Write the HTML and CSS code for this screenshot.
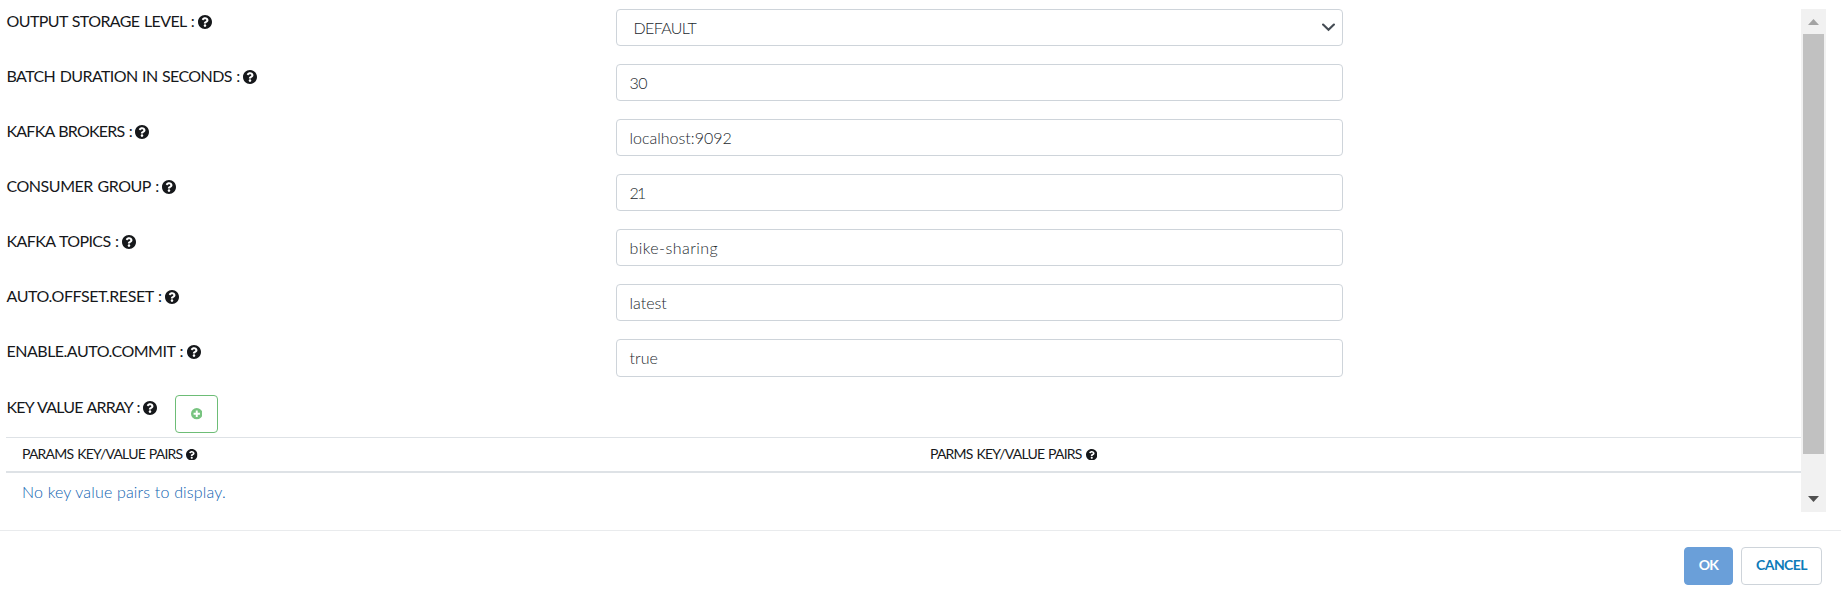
FILE: index.html
```
<!DOCTYPE html>
<html lang="en">
<head>
<meta charset="utf-8">
<title>Kafka settings</title>
<link rel="stylesheet" href="styles.css">
</head>
<body>
<svg class="defs" width="0" height="0" aria-hidden="true">
  <symbol id="help" viewBox="8 8 496 496"><path fill="currentColor" d="M504 256c0 137-111 248-248 248S8 393 8 256 119 8 256 8s248 111 248 248zM262.700 90c-54.500 0-89.300 23-116.500 63.800-3.500 5.300-2.400 12.400 2.700 16.300l34.700 26.300c5.200 3.900 12.600 3 16.700-2.100 17.900-22.700 30.100-35.800 57.300-35.800 20.400 0 45.700 13.100 45.700 33 0 15-12.400 22.700-32.500 34C247.100 238.500 216 254.900 216 296v4c0 6.600 5.400 12 12 12h56c6.600 0 12-5.400 12-12v-1.300c0-28.500 83.200-29.600 83.200-106.700 0-58-60.200-102-116.500-102zM256 338c-25.400 0-46 20.600-46 46s20.600 46 46 46 46-20.600 46-46-20.600-46-46-46z"/></symbol>
  <symbol id="plus" viewBox="0 0 12 12"><path fill="currentColor" fill-rule="evenodd" d="M6 0a6 6 0 1 1 0 12A6 6 0 0 1 6 0zM5 2.700V5H2.700v2H5v2.300h2V7h2.300V5H7V2.700z"/></symbol>
</svg>
<main class="scroller">
  <div class="content">
    <div class="row"><label class="label"><span class="l1">OUTPUT STORAGE LEVEL :</span><svg class="help"><use href="#help"/></svg></label><div class="field select"><span class="v1">DEFAULT</span><svg class="chevron" viewBox="0 0 12 8"><path d="M1 1.300 6 6l5-4.700" fill="none" stroke="#454c54" stroke-width="2" stroke-linecap="round"/></svg></div></div>
    <div class="row"><label class="label"><span class="l2">BATCH DURATION IN SECONDS :</span><svg class="help"><use href="#help"/></svg></label><div class="field"><span class="v2">30</span></div></div>
    <div class="row"><label class="label"><span class="l3">KAFKA BROKERS :</span><svg class="help"><use href="#help"/></svg></label><div class="field"><span class="v3">localhost:9092</span></div></div>
    <div class="row"><label class="label"><span class="l4">CONSUMER GROUP :</span><svg class="help"><use href="#help"/></svg></label><div class="field"><span class="v4">21</span></div></div>
    <div class="row"><label class="label"><span class="l5">KAFKA TOPICS :</span><svg class="help"><use href="#help"/></svg></label><div class="field"><span class="v5">bike-sharing</span></div></div>
    <div class="row"><label class="label"><span class="l6">AUTO.OFFSET.RESET :</span><svg class="help"><use href="#help"/></svg></label><div class="field"><span class="v6">latest</span></div></div>
    <div class="row row-last"><label class="label"><span class="l7">ENABLE.AUTO.COMMIT :</span><svg class="help"><use href="#help"/></svg></label><div class="field"><span class="v7">true</span></div></div>
    <div class="array"><label class="label"><span class="l8">KEY VALUE ARRAY :</span><svg class="help"><use href="#help"/></svg></label><button class="add" aria-label="Add"><svg class="plus"><use href="#plus"/></svg></button></div>
    <div class="pairs">
      <div class="pairs-head">
        <div class="th"><span class="h1">PARAMS KEY/VALUE PAIRS</span><svg class="help small"><use href="#help"/></svg></div>
        <div class="th"><span class="h2">PARMS KEY/VALUE PAIRS</span><svg class="help small"><use href="#help"/></svg></div>
      </div>
      <div class="empty"><span class="e1">No key value pairs to display.</span></div>
    </div>
  </div>
  <div class="scrollbar">
    <svg class="arrow" viewBox="0 0 11 6"><path d="M0 6 5.500 0 11 6z" fill="#a3a3a3"/></svg>
    <div class="thumb"></div>
    <svg class="arrow down" viewBox="0 0 11 6"><path d="M0 0h11L5.500 6z" fill="#505050"/></svg>
  </div>
</main>
<footer class="footer"><button class="btn ok"><span>OK</span></button><button class="btn cancel"><span>CANCEL</span></button></footer>
</body>
</html>
```
FILE: styles.css
```
* { box-sizing: border-box; }
body { margin: 0; height: 593px; overflow: hidden; background: #fff; color: #212529; font: 16px/20px Lato, "Open Sans", sans-serif; font-kerning: normal; }
.defs { display: block; }
span { white-space: nowrap; }
.scroller { display: flex; height: 521px; padding: 9px 15px 9px 6px; }
.content { flex: 1; }
.row { display: grid; grid-template-columns: 610px 727px; align-items: start; height: 55px; }
.row-last { height: 56px; }
.label { display: flex; align-items: center; gap: 3.500px; height: 20px; margin-top: 3px; padding-left: 0.500px; color: #16181b; word-spacing: 1px; }
.label span { margin-top: -2px; }
.help { width: 14px; height: 14px; flex: none; margin-top: -1px; }
.small { width: 11.500px; height: 11.500px; margin-top: 0; }
.field { display: flex; align-items: center; height: 37px; padding: 0 12.500px; border: 1px solid #ced4da; border-radius: 4px; color: #23282e; font-weight: 300; }
.row-last .field { height: 38px; }
.select { justify-content: space-between; padding: 0 7px 0 16.500px; }
.chevron { width: 13px; height: 9px; margin-top: 0; }
.array { display: flex; gap: 17.500px; height: 42px; }
.add { display: flex; align-items: center; justify-content: center; width: 43px; height: 38px; padding: 0; background: #fff; border: 1px solid #6dbd76; border-radius: 4px; color: #78c480; }
.plus { width: 11.500px; height: 11.500px; }
.pairs { border-top: 1px solid #dee2e6; }
.pairs-head { display: grid; grid-template-columns: 908px 1fr; height: 35px; border-bottom: 2px solid #dee2e6; font-size: 14px; color: #16181b; word-spacing: 1px; }
.th { display: flex; align-items: center; gap: 4px; padding-left: 16px; }
.th span { margin-top: -1px; }
.empty { padding: 9px 16px; color: #0e62b0; font-weight: 300; }
.scrollbar { display: flex; flex-direction: column; align-items: center; width: 25px; background: #f1f1f1; }
.arrow { width: 11px; height: 6px; margin-top: 10px; }
.thumb { width: 21px; height: 420px; margin-top: 9px; background: #c1c1c1; }
.down { margin-top: 42px; }
.footer { display: flex; justify-content: flex-end; gap: 8px; height: 63px; margin-top: 9px; padding: 16px 19px 0 0; border-top: 1px solid #e9ebed; }
.btn { height: 38px; padding: 0 0 2px; border-radius: 4px; font: bold 14px/20px Lato, sans-serif; letter-spacing: -0.6px; }
.ok { width: 49px; background: #6a9fd9; border: 1px solid #6a9fd9; color: #fff; }
.cancel { width: 81px; background: #fff; border: 1px solid #ced4da; color: #0d7bb9; }

/* tracking per caption */
.l1, .l2, .l5, .l7 { letter-spacing: -0.6px; }
.l3 { letter-spacing: -0.78px; }
.l4 { letter-spacing: -0.46px; }
.l6 { letter-spacing: -0.42px; }
.l7 { letter-spacing: -0.5px; }
.l8 { letter-spacing: -0.8px; }
.h1, .h2 { letter-spacing: -0.78px; }
.v1 { letter-spacing: -0.65px; }
.v2 { letter-spacing: -0.5px; }
.v4 { letter-spacing: -1.8px; }
.v5 { letter-spacing: 0.45px; }
.e1 { letter-spacing: 0.18px; }
```
